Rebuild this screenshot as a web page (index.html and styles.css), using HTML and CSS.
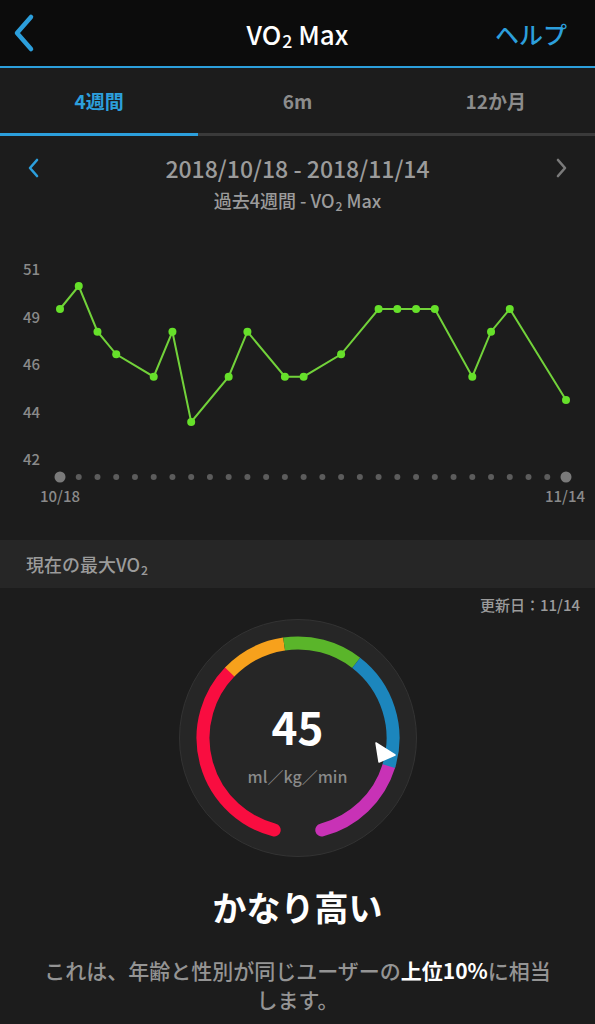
FILE: index.html
```html
<!DOCTYPE html>
<html lang="ja">
<head>
    <meta charset="UTF-8">
    <meta name="viewport" content="width=device-width, initial-scale=1.0">
    <title>VO₂ Max</title>
    <link rel="stylesheet" href="styles.css">
</head>
<body>
    <!-- Barra superior -->
    <div class="topbar">
        <div class="back">
            <svg width="24" height="40" viewBox="0 0 24 40"><path d="M19 4 L5 20 L19 36" fill="none" stroke="#2c9fdc" stroke-width="4.5" stroke-linecap="round" stroke-linejoin="round"/></svg>
        </div>
        <div class="title">VO<span class="sub">2</span> Max</div>
        <div class="help">ヘルプ</div>
    </div>

    <div class="tabs">
        <div class="tab active">4週間</div>
        <div class="tab">6m</div>
        <div class="tab">12か月</div>
    </div>

    <div class="range">
        <div class="range-head">
            <svg class="arrow" width="14" height="22" viewBox="0 0 14 22"><path d="M11 3 L4 11 L11 19" fill="none" stroke="#2c9fdc" stroke-width="2.6" stroke-linecap="round" stroke-linejoin="round"/></svg>
            <div class="dates">2018/10/18 - 2018/11/14</div>
            <svg class="arrow" width="14" height="22" viewBox="0 0 14 22"><path d="M3 3 L10 11 L3 19" fill="none" stroke="#7a7a7a" stroke-width="2.6" stroke-linecap="round" stroke-linejoin="round"/></svg>
        </div>
        <div class="subtitle">過去4週間 - VO<span class="sub">2</span> Max</div>
    </div>

    <svg class="chart" width="595" height="318" viewBox="0 0 595 318">
        <g class="ylabels" text-anchor="end">
            <text x="40" y="53">51</text>
            <text x="40" y="101">49</text>
            <text x="40" y="148">46</text>
            <text x="40" y="196">44</text>
            <text x="40" y="243">42</text>
        </g>
        <g id="days" fill="#5c5c5c"></g>
        <polyline id="line" fill="none" stroke="#72d23a" stroke-width="2"/>
        <g id="points" fill="#66e02a"></g>
        <text class="xlabel" x="60" y="280" text-anchor="middle">10/18</text>
        <text class="xlabel" x="565" y="280" text-anchor="middle">11/14</text>
    </svg>

    <div class="section">現在の最大VO<span class="sub">2</span></div>
    <div class="updated">更新日：11/14</div>

    <div class="gauge">
        <svg class="gauge-bg" width="240" height="240" viewBox="0 0 240 240">
            <circle cx="120" cy="120" r="118.5" fill="#262626" stroke="#333333" stroke-width="1"/>
            <path d="M96.2 212 A95 95 0 0 1 51.7 54" fill="none" stroke="#f90d40" stroke-width="13" stroke-linecap="round"/>
            <path d="M210.8 148.1 A95 95 0 0 1 143.8 212" fill="none" stroke="#c832b6" stroke-width="13" stroke-linecap="round"/>
            <path d="M51.7 54 A95 95 0 0 1 106.1 26" fill="none" stroke="#f7a11c" stroke-width="13"/>
            <path d="M106.1 26 A95 95 0 0 1 178.2 44.9" fill="none" stroke="#5ab52a" stroke-width="13"/>
            <path d="M178.2 44.9 A95 95 0 0 1 210.8 148.1" fill="none" stroke="#1c86bd" stroke-width="13"/>
            <path d="M198 125 L217 137 L201 144 Z" fill="#ffffff" stroke="#ffffff" stroke-width="1.5" stroke-linejoin="round"/>
        </svg>
        <div class="value">45</div>
        <div class="unit">ml／kg／min</div>
    </div>

    <div class="result">かなり高い</div>
    <p class="desc">これは、年齢と性別が同じユーザーの<b>上位10%</b>に相当<br>します。</p>

    <script>
        // puntos del gráfico (día, y)
        var datos = [[0,87],[1,64],[2,109.7],[3,132.3],[5,154.7],[6,109.7],[7,200],[9,154.7],[10,109.7],
            [12,154.7],[13,154.7],[15,132.3],[17,87],[18,87],[19,87],[20,87],[22,154.7],[23,109.7],[24,87],[27,178]];
        var paso = (566 - 60) / 27;
        var ns = "http://www.w3.org/2000/svg";

        var dias = document.getElementById("days");
        for (var i = 0; i < 28; i++) {
            var c = document.createElementNS(ns, "circle");
            c.setAttribute("cx", 60 + i * paso);
            c.setAttribute("cy", 255);
            c.setAttribute("r", (i == 0 || i == 27) ? 5.5 : 3);
            if (i == 0 || i == 27) c.setAttribute("fill", "#7a7a7a");
            dias.appendChild(c);
        }

        var pts = [];
        var grupo = document.getElementById("points");
        datos.forEach(function (d) {
            var x = 60 + d[0] * paso;
            pts.push(x.toFixed(1) + "," + d[1]);
            var p = document.createElementNS(ns, "circle");
            p.setAttribute("cx", x);
            p.setAttribute("cy", d[1]);
            p.setAttribute("r", 4);
            grupo.appendChild(p);
        });
        document.getElementById("line").setAttribute("points", pts.join(" "));
    </script>
</body>
</html>
```

FILE: styles.css
```css
body {
    margin: 0;
    width: 595px;
    background: #1c1c1c;
    font-family: "Noto Sans CJK JP", "DejaVu Sans", sans-serif;
    color: #9b9b9b;
}
.sub {
    font-size: 0.68em;
    position: relative;
    top: 0.22em;
    margin-left: 1px;
}
.topbar {
    height: 66px;
    background: #0c0c0c;
    border-bottom: 2px solid #2c9fdc;
    display: flex;
    align-items: center;
    justify-content: space-between;
    position: relative;
}
.back {
    padding-left: 12px;
    display: flex;
}
.title {
    color: #ffffff;
    font-size: 26px;
    font-weight: 500;
    position: absolute;
    left: 0;
    right: 0;
    text-align: center;
    pointer-events: none;
}
.help {
    color: #2c9fdc;
    font-size: 24px;
    font-weight: 500;
    padding-right: 28px;
}
.tabs {
    display: flex;
    height: 68px;
}
.tab {
    flex: 1;
    display: flex;
    align-items: center;
    justify-content: center;
    font-size: 19px;
    font-weight: bold;
    color: #8c8c8c;
    border-bottom: 3px solid #3a3a3a;
}
.tab.active {
    color: #2c9fdc;
    border-bottom-color: #2c9fdc;
}
.range {
    height: 86px;
    padding-top: 18px;
    box-sizing: border-box;
}
.range-head {
    display: flex;
    align-items: center;
    justify-content: space-between;
    padding: 0 26px;
    height: 28px;
}
.dates {
    font-size: 23px;
    font-weight: 500;
    color: #9b9b9b;
}
.subtitle {
    text-align: center;
    font-size: 18px;
    font-weight: 500;
    line-height: 24px;
    margin-top: 6px;
    color: #9b9b9b;
}
.chart {
    display: block;
}
.ylabels text, .xlabel {
    font-family: "Noto Sans CJK JP", sans-serif;
    font-size: 15px;
    font-weight: 500;
    fill: #8a8a8a;
}
.section {
    height: 48px;
    line-height: 48px;
    background: #262626;
    padding-left: 26px;
    font-size: 18px;
    font-weight: 500;
    color: #9b9b9b;
}
.updated {
    text-align: right;
    padding: 6px 15px 0 0;
    line-height: 22px;
    font-size: 15px;
    font-weight: 500;
    color: #9b9b9b;
}
.gauge {
    width: 240px;
    height: 240px;
    margin: 2px auto 0;
    position: relative;
    display: flex;
    flex-direction: column;
    align-items: center;
}
.gauge-bg {
    position: absolute;
    top: 0;
    left: 0;
}
.value {
    position: relative;
    margin-top: 80px;
    font-size: 44px;
    font-weight: bold;
    line-height: 56px;
    color: #ffffff;
}
.unit {
    position: relative;
    margin-top: 10px;
    font-size: 16px;
    font-weight: 500;
    color: #8a8a8a;
}
.result {
    text-align: center;
    margin-top: 25px;
    font-size: 34px;
    line-height: 48px;
    font-weight: bold;
    color: #ffffff;
}
.desc {
    margin: 25px 0 0;
    text-align: center;
    font-size: 21px;
    font-weight: 500;
    line-height: 29px;
    color: #949494;
}
.desc b {
    color: #ffffff;
}
```
